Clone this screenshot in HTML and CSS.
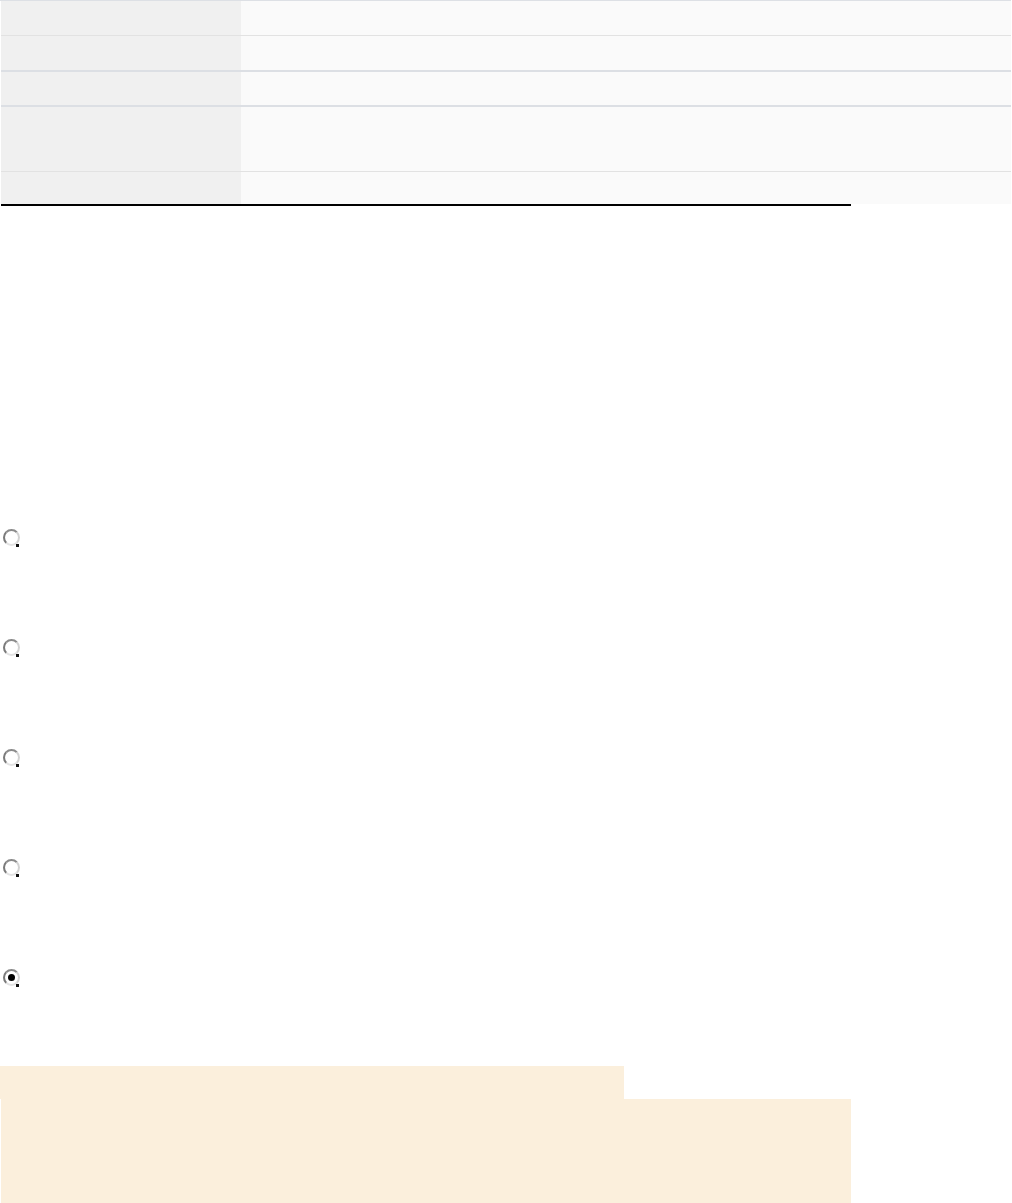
FILE: index.html
```html
<!DOCTYPE html>
<html>
<head>
<meta charset="utf-8">
<link rel="stylesheet" href="styles.css">
</head>
<body>
<div class="sheet">
  <div class="table">
    <div class="row r1"><div class="key"></div><div class="val"></div></div>
    <div class="row r2"><div class="key"></div><div class="val"></div></div>
    <div class="row r3"><div class="key"></div><div class="val"></div></div>
    <div class="row r4"><div class="key"></div><div class="val"></div></div>
    <div class="row r5"><div class="key"></div><div class="val"></div></div>
  </div>
</div>
<div class="options">
  <span class="radio"></span>
  <span class="radio"></span>
  <span class="radio"></span>
  <span class="radio"></span>
  <span class="radio checked"></span>
</div>
<div class="note">
  <div class="note-head"></div>
  <div class="note-body"></div>
</div>
</body>
</html>
```
FILE: styles.css
```css
html, body {
  margin: 0;
  padding: 0;
  background: #ffffff;
  font-family: "Liberation Sans", Arial, sans-serif;
}
body {
  width: 1012px;
  overflow: hidden;
}
.sheet {
  width: 850px;
  margin-left: 1px;
  border-bottom: 2px solid #000000;
}
.table {
  width: 1011px;
  border-top: 1px solid #dde0e5;
  margin-left: -1px;
  padding-left: 1px;
  box-sizing: border-box;
}
.row {
  display: flex;
}
.key {
  width: 240px;
  flex: none;
  background: #f0f0f0;
}
.val {
  flex: 1;
  background: #fafafa;
}
.r1 { height: 34px; border-bottom: 1px solid #e2e2e2; }
.r2 { height: 34px; border-bottom: 2px solid #dcdfe4; }
.r3 { height: 33px; border-bottom: 2px solid #dcdfe4; }
.r4 { height: 64px; border-bottom: 1px solid #e2e2e2; }
.r5 { height: 32px; }

.options {
  display: flex;
  flex-direction: column;
  gap: 93px;
  margin-top: 323px;
  padding-left: 3px;
}
.radio {
  position: relative;
  display: block;
  width: 13px;
  height: 13px;
  border-radius: 50%;
  border: 2px solid;
  border-color: #8a8a8a #d2d2d2 #e2e2e2 #7a7a7a;
  background: #ffffff;
}
.radio::after {
  content: "";
  position: absolute;
  right: -1px;
  bottom: -3px;
  width: 3px;
  height: 3px;
  background: #111111;
}
.radio.checked::before {
  content: "";
  position: absolute;
  left: 3px;
  top: 3px;
  width: 7px;
  height: 7px;
  border-radius: 50%;
  background: #000000;
}
.note {
  margin-top: 80px;
}
.note-head {
  width: 624px;
  height: 33px;
  background: #fbefdc;
}
.note-body {
  width: 850px;
  margin-left: 1px;
  height: 110px;
  background: #fbefdc;
}
```
